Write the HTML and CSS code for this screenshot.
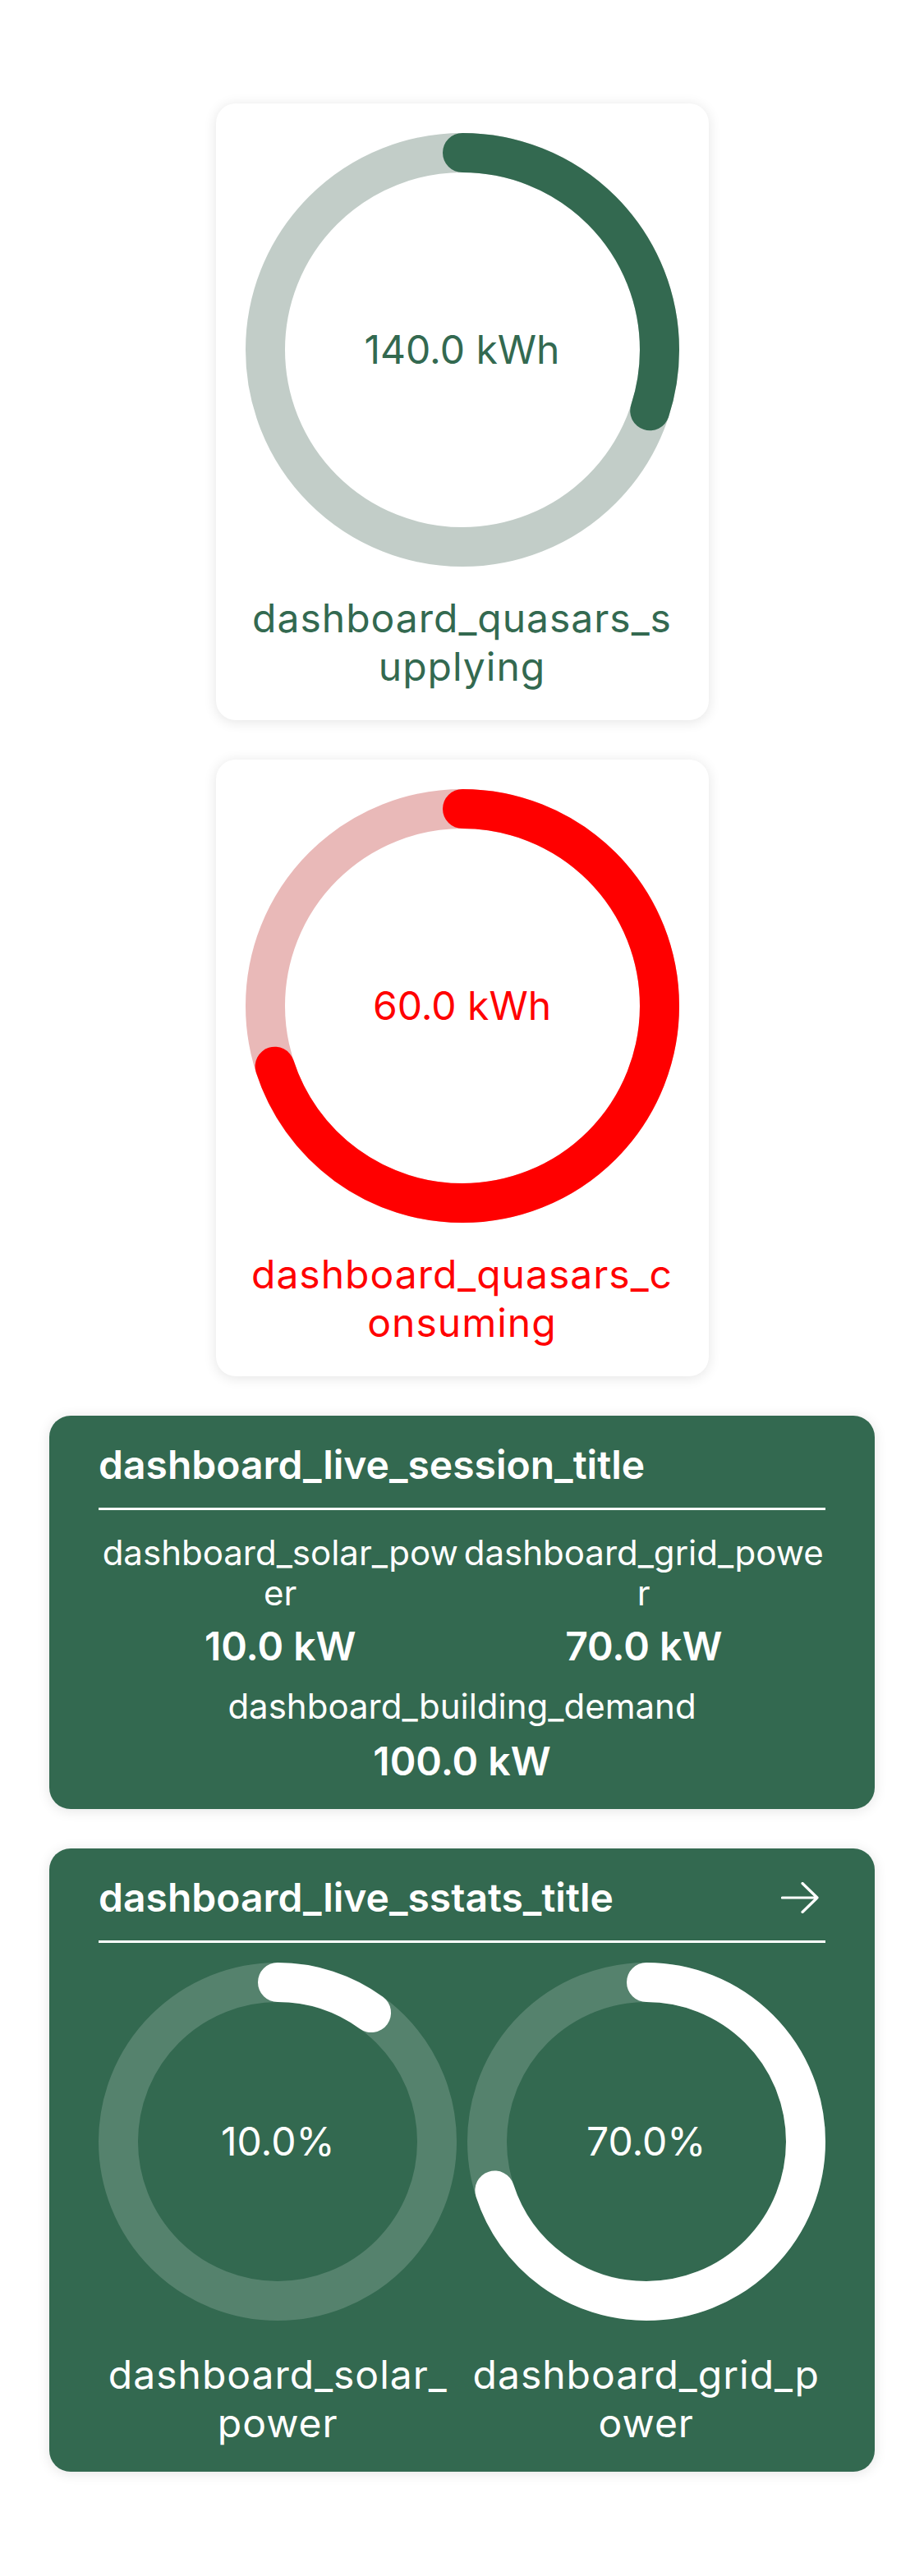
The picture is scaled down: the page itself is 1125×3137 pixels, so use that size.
FILE: index.html
```html
<!DOCTYPE html>
<html lang="en">
<head>
<meta charset="utf-8">
<title>Dashboard</title>
<link rel="stylesheet" href="styles.css">
</head>
<body>
<main class="page">
  <section class="gauge-card supply">
    <div class="ring">
      <svg class="ring-svg" viewBox="0 0 528 528" width="528" height="528">
        <circle class="track" cx="264" cy="264" r="240"></circle>
        <circle class="bar" cx="264" cy="264" r="240" stroke-dasharray="452.4 1508" transform="rotate(-90 264 264)"></circle>
      </svg>
      <div class="ring-value">140.0 kWh</div>
    </div>
    <div class="gauge-label">dashboard_quasars_supplying</div>
  </section>

  <section class="gauge-card consume">
    <div class="ring">
      <svg class="ring-svg" viewBox="0 0 528 528" width="528" height="528">
        <circle class="track" cx="264" cy="264" r="240"></circle>
        <circle class="bar" cx="264" cy="264" r="240" stroke-dasharray="1055.6 1508" transform="rotate(-90 264 264)"></circle>
      </svg>
      <div class="ring-value">60.0 kWh</div>
    </div>
    <div class="gauge-label">dashboard_quasars_consuming</div>
  </section>

  <section class="panel">
    <div class="panel-head">
      <h2 class="panel-title">dashboard_live_session_title</h2>
    </div>
    <div class="divider"></div>
    <div class="stats">
      <div class="stat">
        <div class="stat-label">dashboard_solar_power</div>
        <div class="stat-value">10.0 kW</div>
      </div>
      <div class="stat">
        <div class="stat-label">dashboard_grid_power</div>
        <div class="stat-value">70.0 kW</div>
      </div>
    </div>
    <div class="stat stat-wide">
      <div class="stat-label">dashboard_building_demand</div>
      <div class="stat-value">100.0 kW</div>
    </div>
  </section>

  <section class="panel">
    <div class="panel-head">
      <h2 class="panel-title">dashboard_live_sstats_title</h2>
      <svg class="arrow" viewBox="0 0 46 38" width="46" height="38">
        <path d="M1.5 19H44M26 1.5L44 19L26 36.5" fill="none" stroke="#fff" stroke-width="3.2" stroke-linecap="round" stroke-linejoin="round"></path>
      </svg>
    </div>
    <div class="divider"></div>
    <div class="mini-gauges">
      <div class="mini">
        <div class="ring mini-ring">
          <svg class="ring-svg" viewBox="0 0 436 436" width="436" height="436">
            <circle class="track" cx="218" cy="218" r="194"></circle>
            <circle class="bar" cx="218" cy="218" r="194" stroke-dasharray="121.9 1219" transform="rotate(-90 218 218)"></circle>
          </svg>
          <div class="ring-value">10.0%</div>
        </div>
        <div class="mini-label">dashboard_solar_power</div>
      </div>
      <div class="mini">
        <div class="ring mini-ring">
          <svg class="ring-svg" viewBox="0 0 436 436" width="436" height="436">
            <circle class="track" cx="218" cy="218" r="194"></circle>
            <circle class="bar" cx="218" cy="218" r="194" stroke-dasharray="853.3 1219" transform="rotate(-90 218 218)"></circle>
          </svg>
          <div class="ring-value">70.0%</div>
        </div>
        <div class="mini-label">dashboard_grid_power</div>
      </div>
    </div>
  </section>
</main>
</body>
</html>
```

FILE: styles.css
```css
* { box-sizing: border-box; }

html, body {
  margin: 0;
  padding: 0;
  background: #ffffff;
}

body {
  font-family: Inter, "Noto Sans", "Liberation Sans", sans-serif;
  -webkit-font-smoothing: antialiased;
}

.page {
  display: flex;
  flex-direction: column;
  align-items: center;
  gap: 48px;
  padding: 126px 60px 60px;
}

/* ---------- white gauge cards ---------- */
.gauge-card {
  width: 600px;
  background: #ffffff;
  border-radius: 24px;
  box-shadow: 0 2px 16px rgba(0, 0, 0, 0.11);
  padding: 36px 36px 36px;
  display: flex;
  flex-direction: column;
  align-items: center;
}

.ring {
  display: grid;
  place-items: center;
}

.ring > * {
  grid-area: 1 / 1;
}

.ring-svg {
  display: block;
}

.ring-svg circle {
  fill: none;
  stroke-width: 48;
}

.ring-svg .bar {
  stroke-linecap: round;
}

.ring-value {
  font-size: 48px;
  line-height: 58px;
  font-weight: 400;
}

.gauge-label {
  margin-top: 33px;
  width: 100%;
  text-align: center;
  font-size: 48px;
  line-height: 59px;
  letter-spacing: 1px;
  word-break: break-all;
}

.supply .track { stroke: #c2cdc8; }
.supply .bar { stroke: #336950; }
.supply .ring-value,
.supply .gauge-label { color: #336950; }

.consume .track { stroke: #e9b9b8; }
.consume .bar { stroke: #ff0000; }
.consume .ring-value,
.consume .gauge-label { color: #ff0000; }

/* ---------- green panels ---------- */
.panel {
  align-self: stretch;
  background: #336950;
  color: #ffffff;
  border-radius: 26px;
  box-shadow: 0 2px 16px rgba(0, 0, 0, 0.11);
  padding: 30px 60px 30px;
  display: flex;
  flex-direction: column;
}

.panel-head {
  display: flex;
  align-items: center;
  justify-content: space-between;
  height: 59px;
}

.panel-title {
  margin: 0;
  font-size: 48px;
  line-height: 59px;
  font-weight: 600;
}

.arrow {
  display: block;
  margin-right: 8px;
}

.divider {
  margin-top: 23px;
  height: 3px;
  background: #ffffff;
}

.stats {
  margin-top: 27px;
  display: grid;
  grid-template-columns: 1fr 1fr;
  column-gap: 0;
}

.stat {
  display: flex;
  flex-direction: column;
  align-items: center;
  text-align: center;
}

.stat-label {
  font-size: 42px;
  line-height: 49px;
  word-break: break-all;
}

.stat-value {
  margin-top: 12px;
  font-size: 48px;
  line-height: 57px;
  font-weight: 600;
}

.stat-wide {
  margin-top: 20px;
}

.stat-wide .stat-value {
  margin-top: 14px;
}

.mini-gauges {
  margin-top: 24px;
  display: grid;
  grid-template-columns: 1fr 1fr;
  column-gap: 12px;
}

.mini {
  display: flex;
  flex-direction: column;
  align-items: center;
}

.mini-ring .track { stroke: rgba(255, 255, 255, 0.17); }
.mini-ring .bar { stroke: #ffffff; }
.mini-ring .ring-value { color: #ffffff; }

.mini-label {
  margin-top: 36px;
  width: 436px;
  text-align: center;
  font-size: 48px;
  line-height: 59px;
  letter-spacing: 1px;
  word-break: break-all;
}
```
